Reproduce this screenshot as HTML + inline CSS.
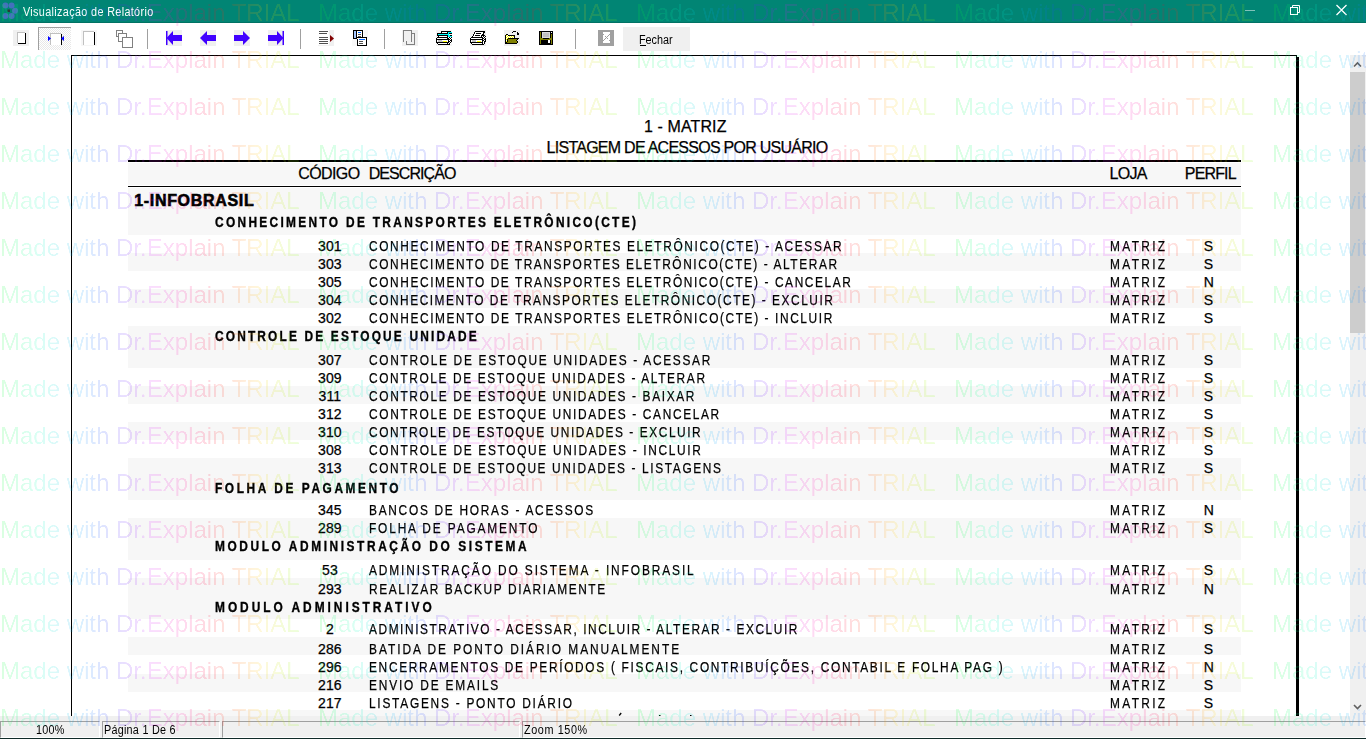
<!DOCTYPE html>
<html><head><meta charset="utf-8">
<style>
html,body{margin:0;padding:0;}
body{width:1366px;height:739px;overflow:hidden;position:relative;background:#ffffff;font-family:"Liberation Sans",sans-serif;}
.t{position:absolute;line-height:40px;white-space:pre;font-family:"Liberation Sans",sans-serif;-webkit-text-stroke:0.25px currentColor;}
.sh{position:absolute;left:128px;width:1113px;background:#f7f7f7;}
.blk{position:absolute;background:#000;}
.pn{position:absolute;top:721px;height:17px;box-sizing:border-box;border-top:1px solid #a0a0a0;border-left:1px solid #a0a0a0;border-right:1px solid #fff;border-bottom:1px solid #fff;}
</style></head><body>
<!-- title bar -->
<div style="position:absolute;left:0;top:0;width:1366px;height:23px;background:#018574"></div>
<div style="position:absolute;left:0;top:22px;width:1366px;height:1px;background:#017264"></div>
<svg style="position:absolute;left:0;top:0" width="1366" height="23">
 <g fill="#4370bd">
  <circle cx="5.4" cy="5.6" r="3"/><circle cx="11.6" cy="5.6" r="3"/><circle cx="15" cy="10.8" r="3"/>
  <circle cx="5.4" cy="15.9" r="3"/><circle cx="11.6" cy="15.9" r="3"/>
 </g>
 <rect x="7.5" y="9.5" width="2.5" height="2.5" fill="#283838"/>
 <rect x="1245" y="10" width="10" height="1" fill="#80c2b9"/>
 <g fill="none" stroke="#ffffff" stroke-width="1">
  <rect x="1290.5" y="7.5" width="7" height="7"/>
  <path d="M1292.5 7.5 V5.5 H1299.5 V12.5 H1297.5"/>
  <path d="M1336.5 5 L1346.5 15 M1346.5 5 L1336.5 15" stroke-width="1.3"/>
 </g>
</svg>
<!-- toolbar -->
<svg style="position:absolute;left:0;top:0" width="700" height="55" shape-rendering="crispEdges">
 <defs>
  <pattern id="dith" width="2" height="2" patternUnits="userSpaceOnUse">
   <rect width="2" height="2" fill="#ffffff"/><rect width="1" height="1" fill="#e8e8e8"/><rect x="1" y="1" width="1" height="1" fill="#e8e8e8"/>
  </pattern>
 </defs>
 <!-- btn1 -->
 <rect x="13" y="30" width="16" height="16" fill="#f0f0f0"/>
 <rect x="17" y="32" width="8" height="11" fill="#c0c0c0"/><rect x="18" y="33" width="7" height="10" fill="#fff"/>
 <rect x="25" y="33" width="1" height="11" fill="#000"/><rect x="18" y="43" width="8" height="1" fill="#000"/>
 <!-- btn2 pressed -->
 <rect x="38" y="27" width="33" height="23" fill="url(#dith)"/>
 <rect x="38" y="27" width="33" height="1" fill="#a0a0a0"/><rect x="38" y="27" width="1" height="23" fill="#a0a0a0"/>
 <rect x="50" y="33" width="11" height="12" fill="#c0c0c0"/><rect x="51" y="34" width="10" height="11" fill="#fff"/>
 <rect x="61" y="34" width="1" height="11" fill="#000"/>
 <path d="M48 36 L51 38.5 L48 41 Z M64 36 L61 38.5 L64 41 Z" fill="#0000ff" shape-rendering="auto"/>
 <!-- btn3 -->
 <rect x="81" y="30" width="16" height="16" fill="#f6f6f6"/>
 <rect x="83" y="31" width="11" height="14" fill="#c0c0c0"/><rect x="84" y="32" width="10" height="13" fill="#fff"/>
 <rect x="94" y="32" width="1" height="13" fill="#000"/>
 <!-- btn4 -->
 <g fill="#fff" stroke="#808080" stroke-width="1">
  <rect x="116.5" y="30.5" width="6" height="6"/><rect x="118.5" y="33.5" width="8" height="8"/><rect x="122.5" y="37.5" width="10" height="10"/>
 </g>
 <!-- separators -->
 <g fill="#a0a0a0"><rect x="147" y="29" width="1" height="20"/><rect x="300" y="29" width="1" height="20"/><rect x="384" y="29" width="1" height="20"/><rect x="575" y="29" width="1" height="20"/></g>
 <!-- arrows -->
 <g fill="#f0f0f0"><rect x="166" y="30" width="16" height="16"/><rect x="200" y="30" width="16" height="16"/><rect x="234" y="30" width="16" height="16"/><rect x="268" y="30" width="16" height="16"/></g>
 <g fill="#4000ff" shape-rendering="auto">
  <rect x="166" y="31" width="1.5" height="14"/><path d="M166.5 38 L173 31 V45 Z"/><rect x="173" y="35" width="9" height="6"/>
  <path d="M200 38 L207 31 V45 Z"/><rect x="207" y="35" width="9" height="6"/>
  <rect x="234" y="35" width="9" height="6"/><path d="M250 38 L243 31 V45 Z"/>
  <rect x="268" y="35" width="9" height="6"/><path d="M283.5 38 L277 31 V45 Z"/><rect x="282.5" y="31" width="1.5" height="14"/>
 </g>
 <!-- lines + red triangle -->
 <rect x="318" y="30" width="16" height="16" fill="#f0f0f0"/><rect x="318" y="30" width="11" height="15" fill="#fff"/>
 <g fill="#505050"><rect x="319" y="31" width="9" height="1"/><rect x="319" y="33" width="8" height="1"/><rect x="319" y="37" width="9" height="1"/><rect x="319" y="39" width="9" height="1"/><rect x="319" y="41" width="9" height="1"/><rect x="319" y="43" width="9" height="1"/></g>
 <path d="M330 35 L334 38.5 L330 42 Z" fill="#800000" shape-rendering="auto"/>
 <rect x="402" y="30" width="16" height="16" fill="#f0f0f0"/>
 <g fill="#808080"><rect x="403" y="30" width="1" height="12"/><rect x="403" y="30" width="9" height="1"/><rect x="411" y="30" width="1" height="12"/>
 <rect x="411" y="33" width="4" height="1"/><rect x="414" y="33" width="1" height="12"/><rect x="406" y="44" width="9" height="1"/><rect x="406" y="41" width="1" height="4"/></g>
 <rect x="436" y="30" width="16" height="16" fill="#f4f4f4"/>
 <rect x="470" y="30" width="16" height="16" fill="#f0f0f0"/>
 <rect x="504" y="30" width="16" height="16" fill="#f0f0f0"/>
 <rect x="364" y="30" width="4" height="8" fill="#f8f8f8"/><rect x="352" y="39" width="5" height="7" fill="#f8f8f8"/>
<rect x="441" y="31" width="10" height="1" fill="#000000"/>
<rect x="441" y="32" width="1" height="1" fill="#000000"/>
<rect x="442" y="32" width="5" height="1" fill="#ffffff"/>
<rect x="447" y="32" width="1" height="1" fill="#000000"/>
<rect x="448" y="32" width="4" height="1" fill="#00ffff"/>
<rect x="437" y="33" width="11" height="1" fill="#000000"/>
<rect x="448" y="33" width="1" height="1" fill="#00ffff"/>
<rect x="449" y="33" width="3" height="1" fill="#000000"/>
<rect x="437" y="34" width="1" height="1" fill="#000000"/>
<rect x="438" y="34" width="11" height="1" fill="#00ffff"/>
<rect x="437" y="35" width="11" height="1" fill="#000000"/>
<rect x="448" y="35" width="2" height="1" fill="#00ffff"/>
<rect x="450" y="35" width="2" height="1" fill="#000000"/>
<rect x="438" y="36" width="1" height="1" fill="#000000"/>
<rect x="439" y="36" width="8" height="1" fill="#ffffff"/>
<rect x="447" y="36" width="1" height="1" fill="#000000"/>
<rect x="448" y="36" width="4" height="1" fill="#00ffff"/>
<rect x="437" y="37" width="11" height="1" fill="#000000"/>
<rect x="448" y="37" width="1" height="1" fill="#ffffff"/>
<rect x="449" y="37" width="1" height="1" fill="#000000"/>
<rect x="450" y="37" width="1" height="1" fill="#ffffff"/>
<rect x="451" y="37" width="1" height="1" fill="#000000"/>
<rect x="436" y="38" width="1" height="1" fill="#000000"/>
<rect x="437" y="38" width="10" height="1" fill="#ffffff"/>
<rect x="447" y="38" width="2" height="1" fill="#000000"/>
<rect x="449" y="38" width="1" height="1" fill="#ffffff"/>
<rect x="450" y="38" width="1" height="1" fill="#000000"/>
<rect x="451" y="38" width="1" height="1" fill="#ffffff"/>
<rect x="436" y="39" width="14" height="1" fill="#000000"/>
<rect x="450" y="39" width="1" height="1" fill="#ffffff"/>
<rect x="451" y="39" width="1" height="1" fill="#000000"/>
<rect x="436" y="40" width="1" height="1" fill="#000000"/>
<rect x="437" y="40" width="1" height="1" fill="#ffffff"/>
<rect x="438" y="40" width="4" height="1" fill="#c0c0c0"/>
<rect x="442" y="40" width="6" height="1" fill="#ffffff"/>
<rect x="448" y="40" width="1" height="1" fill="#000000"/>
<rect x="449" y="40" width="1" height="1" fill="#ffffff"/>
<rect x="450" y="40" width="2" height="1" fill="#000000"/>
<rect x="436" y="41" width="1" height="1" fill="#000000"/>
<rect x="437" y="41" width="1" height="1" fill="#ffffff"/>
<rect x="438" y="41" width="5" height="1" fill="#c0c0c0"/>
<rect x="443" y="41" width="4" height="1" fill="#ffff00"/>
<rect x="447" y="41" width="1" height="1" fill="#ffffff"/>
<rect x="448" y="41" width="2" height="1" fill="#000000"/>
<rect x="450" y="41" width="1" height="1" fill="#ffffff"/>
<rect x="451" y="41" width="1" height="1" fill="#000000"/>
<rect x="436" y="42" width="13" height="1" fill="#000000"/>
<rect x="449" y="42" width="1" height="1" fill="#ffffff"/>
<rect x="450" y="42" width="1" height="1" fill="#000000"/>
<rect x="437" y="43" width="1" height="1" fill="#000000"/>
<rect x="438" y="43" width="9" height="1" fill="#ffffff"/>
<rect x="447" y="43" width="1" height="1" fill="#000000"/>
<rect x="448" y="43" width="1" height="1" fill="#ffffff"/>
<rect x="449" y="43" width="1" height="1" fill="#000000"/>
<rect x="450" y="43" width="1" height="1" fill="#ffffff"/>
<rect x="438" y="44" width="12" height="1" fill="#000000"/>
<rect x="475" y="31" width="10" height="1" fill="#000000"/>
<rect x="474" y="32" width="1" height="1" fill="#000000"/>
<rect x="475" y="32" width="8" height="1" fill="#ffffff"/>
<rect x="483" y="32" width="2" height="1" fill="#000000"/>
<rect x="474" y="33" width="1" height="1" fill="#000000"/>
<rect x="475" y="33" width="1" height="1" fill="#ffffff"/>
<rect x="476" y="33" width="5" height="1" fill="#000000"/>
<rect x="481" y="33" width="2" height="1" fill="#ffffff"/>
<rect x="483" y="33" width="1" height="1" fill="#000000"/>
<rect x="473" y="34" width="1" height="1" fill="#000000"/>
<rect x="474" y="34" width="8" height="1" fill="#ffffff"/>
<rect x="482" y="34" width="2" height="1" fill="#000000"/>
<rect x="473" y="35" width="1" height="1" fill="#000000"/>
<rect x="474" y="35" width="1" height="1" fill="#ffffff"/>
<rect x="475" y="35" width="5" height="1" fill="#000000"/>
<rect x="480" y="35" width="1" height="1" fill="#ffffff"/>
<rect x="481" y="35" width="4" height="1" fill="#000000"/>
<rect x="472" y="36" width="1" height="1" fill="#000000"/>
<rect x="473" y="36" width="8" height="1" fill="#ffffff"/>
<rect x="481" y="36" width="1" height="1" fill="#000000"/>
<rect x="482" y="36" width="1" height="1" fill="#ffffff"/>
<rect x="483" y="36" width="1" height="1" fill="#000000"/>
<rect x="484" y="36" width="1" height="1" fill="#ffffff"/>
<rect x="485" y="36" width="1" height="1" fill="#000000"/>
<rect x="471" y="37" width="12" height="1" fill="#000000"/>
<rect x="483" y="37" width="1" height="1" fill="#ffffff"/>
<rect x="484" y="37" width="1" height="1" fill="#000000"/>
<rect x="485" y="37" width="1" height="1" fill="#ffffff"/>
<rect x="470" y="38" width="1" height="1" fill="#000000"/>
<rect x="471" y="38" width="11" height="1" fill="#ffffff"/>
<rect x="482" y="38" width="2" height="1" fill="#000000"/>
<rect x="484" y="38" width="1" height="1" fill="#ffffff"/>
<rect x="485" y="38" width="1" height="1" fill="#000000"/>
<rect x="470" y="39" width="13" height="1" fill="#000000"/>
<rect x="483" y="39" width="1" height="1" fill="#ffffff"/>
<rect x="484" y="39" width="2" height="1" fill="#000000"/>
<rect x="470" y="40" width="1" height="1" fill="#000000"/>
<rect x="471" y="40" width="1" height="1" fill="#ffffff"/>
<rect x="472" y="40" width="4" height="1" fill="#c0c0c0"/>
<rect x="476" y="40" width="6" height="1" fill="#ffffff"/>
<rect x="482" y="40" width="2" height="1" fill="#000000"/>
<rect x="484" y="40" width="1" height="1" fill="#ffffff"/>
<rect x="485" y="40" width="1" height="1" fill="#000000"/>
<rect x="470" y="41" width="1" height="1" fill="#000000"/>
<rect x="471" y="41" width="1" height="1" fill="#ffffff"/>
<rect x="472" y="41" width="4" height="1" fill="#c0c0c0"/>
<rect x="476" y="41" width="1" height="1" fill="#ffffff"/>
<rect x="477" y="41" width="4" height="1" fill="#ffff00"/>
<rect x="481" y="41" width="1" height="1" fill="#ffffff"/>
<rect x="482" y="41" width="1" height="1" fill="#000000"/>
<rect x="483" y="41" width="1" height="1" fill="#ffffff"/>
<rect x="484" y="41" width="2" height="1" fill="#000000"/>
<rect x="470" y="42" width="13" height="1" fill="#000000"/>
<rect x="483" y="42" width="1" height="1" fill="#ffffff"/>
<rect x="484" y="42" width="1" height="1" fill="#000000"/>
<rect x="471" y="43" width="1" height="1" fill="#000000"/>
<rect x="472" y="43" width="10" height="1" fill="#ffffff"/>
<rect x="482" y="43" width="1" height="1" fill="#000000"/>
<rect x="483" y="43" width="1" height="1" fill="#ffffff"/>
<rect x="484" y="43" width="1" height="1" fill="#000000"/>
<rect x="472" y="44" width="12" height="1" fill="#000000"/>
<rect x="513" y="31" width="3" height="1" fill="#000000"/>
<rect x="512" y="32" width="1" height="1" fill="#000000"/>
<rect x="517" y="32" width="1" height="1" fill="#000000"/>
<rect x="517" y="33" width="2" height="1" fill="#000000"/>
<rect x="506" y="34" width="2" height="1" fill="#000000"/>
<rect x="517" y="34" width="2" height="1" fill="#000000"/>
<rect x="505" y="35" width="1" height="1" fill="#000000"/>
<rect x="506" y="35" width="1" height="1" fill="#ffff00"/>
<rect x="507" y="35" width="1" height="1" fill="#ffffff"/>
<rect x="508" y="35" width="7" height="1" fill="#000000"/>
<rect x="505" y="36" width="1" height="1" fill="#000000"/>
<rect x="506" y="36" width="1" height="1" fill="#ffffff"/>
<rect x="507" y="36" width="1" height="1" fill="#ffff00"/>
<rect x="508" y="36" width="1" height="1" fill="#ffffff"/>
<rect x="509" y="36" width="1" height="1" fill="#ffff00"/>
<rect x="510" y="36" width="1" height="1" fill="#ffffff"/>
<rect x="511" y="36" width="1" height="1" fill="#ffff00"/>
<rect x="512" y="36" width="1" height="1" fill="#ffffff"/>
<rect x="513" y="36" width="1" height="1" fill="#ffff00"/>
<rect x="514" y="36" width="1" height="1" fill="#000000"/>
<rect x="505" y="37" width="1" height="1" fill="#000000"/>
<rect x="506" y="37" width="1" height="1" fill="#ffff00"/>
<rect x="507" y="37" width="1" height="1" fill="#ffffff"/>
<rect x="508" y="37" width="1" height="1" fill="#ffff00"/>
<rect x="509" y="37" width="1" height="1" fill="#ffffff"/>
<rect x="510" y="37" width="1" height="1" fill="#ffff00"/>
<rect x="511" y="37" width="1" height="1" fill="#ffffff"/>
<rect x="512" y="37" width="1" height="1" fill="#ffff00"/>
<rect x="513" y="37" width="1" height="1" fill="#ffffff"/>
<rect x="514" y="37" width="1" height="1" fill="#000000"/>
<rect x="505" y="38" width="1" height="1" fill="#000000"/>
<rect x="506" y="38" width="1" height="1" fill="#ffffff"/>
<rect x="507" y="38" width="1" height="1" fill="#ffff00"/>
<rect x="508" y="38" width="11" height="1" fill="#000000"/>
<rect x="505" y="39" width="1" height="1" fill="#000000"/>
<rect x="506" y="39" width="1" height="1" fill="#ffff00"/>
<rect x="507" y="39" width="1" height="1" fill="#000000"/>
<rect x="508" y="39" width="9" height="1" fill="#808000"/>
<rect x="517" y="39" width="1" height="1" fill="#000000"/>
<rect x="505" y="40" width="1" height="1" fill="#000000"/>
<rect x="506" y="40" width="1" height="1" fill="#ffffff"/>
<rect x="507" y="40" width="1" height="1" fill="#000000"/>
<rect x="508" y="40" width="8" height="1" fill="#808000"/>
<rect x="516" y="40" width="1" height="1" fill="#000000"/>
<rect x="505" y="41" width="1" height="1" fill="#000000"/>
<rect x="506" y="41" width="1" height="1" fill="#ffff00"/>
<rect x="507" y="41" width="1" height="1" fill="#000000"/>
<rect x="508" y="41" width="9" height="1" fill="#808000"/>
<rect x="517" y="41" width="1" height="1" fill="#000000"/>
<rect x="505" y="42" width="2" height="1" fill="#000000"/>
<rect x="507" y="42" width="10" height="1" fill="#808000"/>
<rect x="517" y="42" width="1" height="1" fill="#000000"/>
<rect x="505" y="43" width="12" height="1" fill="#000000"/>
<rect x="539" y="31" width="14" height="1" fill="#000000"/>
<rect x="539" y="32" width="1" height="1" fill="#000000"/>
<rect x="540" y="32" width="1" height="1" fill="#808000"/>
<rect x="541" y="32" width="1" height="1" fill="#000000"/>
<rect x="542" y="32" width="8" height="1" fill="#dcdcdc"/>
<rect x="550" y="32" width="1" height="1" fill="#000000"/>
<rect x="551" y="32" width="1" height="1" fill="#ffffff"/>
<rect x="552" y="32" width="1" height="1" fill="#000000"/>
<rect x="539" y="33" width="1" height="1" fill="#000000"/>
<rect x="540" y="33" width="1" height="1" fill="#808000"/>
<rect x="541" y="33" width="1" height="1" fill="#000000"/>
<rect x="542" y="33" width="1" height="1" fill="#dcdcdc"/>
<rect x="543" y="33" width="6" height="1" fill="#c0c0c0"/>
<rect x="549" y="33" width="1" height="1" fill="#dcdcdc"/>
<rect x="550" y="33" width="3" height="1" fill="#000000"/>
<rect x="539" y="34" width="1" height="1" fill="#000000"/>
<rect x="540" y="34" width="1" height="1" fill="#808000"/>
<rect x="541" y="34" width="1" height="1" fill="#000000"/>
<rect x="542" y="34" width="1" height="1" fill="#dcdcdc"/>
<rect x="543" y="34" width="6" height="1" fill="#c0c0c0"/>
<rect x="549" y="34" width="1" height="1" fill="#dcdcdc"/>
<rect x="550" y="34" width="1" height="1" fill="#000000"/>
<rect x="551" y="34" width="1" height="1" fill="#808000"/>
<rect x="552" y="34" width="1" height="1" fill="#000000"/>
<rect x="539" y="35" width="1" height="1" fill="#000000"/>
<rect x="540" y="35" width="1" height="1" fill="#808000"/>
<rect x="541" y="35" width="1" height="1" fill="#000000"/>
<rect x="542" y="35" width="1" height="1" fill="#dcdcdc"/>
<rect x="543" y="35" width="6" height="1" fill="#c0c0c0"/>
<rect x="549" y="35" width="1" height="1" fill="#dcdcdc"/>
<rect x="550" y="35" width="1" height="1" fill="#000000"/>
<rect x="551" y="35" width="1" height="1" fill="#808000"/>
<rect x="552" y="35" width="1" height="1" fill="#000000"/>
<rect x="539" y="36" width="1" height="1" fill="#000000"/>
<rect x="540" y="36" width="1" height="1" fill="#808000"/>
<rect x="541" y="36" width="1" height="1" fill="#000000"/>
<rect x="542" y="36" width="1" height="1" fill="#dcdcdc"/>
<rect x="543" y="36" width="6" height="1" fill="#c0c0c0"/>
<rect x="549" y="36" width="1" height="1" fill="#dcdcdc"/>
<rect x="550" y="36" width="1" height="1" fill="#000000"/>
<rect x="551" y="36" width="1" height="1" fill="#808000"/>
<rect x="552" y="36" width="1" height="1" fill="#000000"/>
<rect x="539" y="37" width="1" height="1" fill="#000000"/>
<rect x="540" y="37" width="1" height="1" fill="#808000"/>
<rect x="541" y="37" width="1" height="1" fill="#000000"/>
<rect x="542" y="37" width="8" height="1" fill="#dcdcdc"/>
<rect x="550" y="37" width="1" height="1" fill="#000000"/>
<rect x="551" y="37" width="1" height="1" fill="#808000"/>
<rect x="552" y="37" width="1" height="1" fill="#000000"/>
<rect x="539" y="38" width="1" height="1" fill="#000000"/>
<rect x="540" y="38" width="3" height="1" fill="#808000"/>
<rect x="543" y="38" width="6" height="1" fill="#000000"/>
<rect x="549" y="38" width="3" height="1" fill="#808000"/>
<rect x="552" y="38" width="1" height="1" fill="#000000"/>
<rect x="539" y="39" width="1" height="1" fill="#000000"/>
<rect x="540" y="39" width="12" height="1" fill="#808000"/>
<rect x="552" y="39" width="1" height="1" fill="#000000"/>
<rect x="539" y="40" width="1" height="1" fill="#000000"/>
<rect x="540" y="40" width="1" height="1" fill="#808000"/>
<rect x="541" y="40" width="7" height="1" fill="#000000"/>
<rect x="548" y="40" width="2" height="1" fill="#ffffff"/>
<rect x="550" y="40" width="1" height="1" fill="#000000"/>
<rect x="551" y="40" width="1" height="1" fill="#808000"/>
<rect x="552" y="40" width="1" height="1" fill="#000000"/>
<rect x="539" y="41" width="1" height="1" fill="#000000"/>
<rect x="540" y="41" width="1" height="1" fill="#808000"/>
<rect x="541" y="41" width="7" height="1" fill="#000000"/>
<rect x="548" y="41" width="2" height="1" fill="#ffffff"/>
<rect x="550" y="41" width="1" height="1" fill="#000000"/>
<rect x="551" y="41" width="1" height="1" fill="#808000"/>
<rect x="552" y="41" width="1" height="1" fill="#000000"/>
<rect x="539" y="42" width="1" height="1" fill="#000000"/>
<rect x="540" y="42" width="1" height="1" fill="#808000"/>
<rect x="541" y="42" width="7" height="1" fill="#000000"/>
<rect x="548" y="42" width="2" height="1" fill="#ffffff"/>
<rect x="550" y="42" width="1" height="1" fill="#000000"/>
<rect x="551" y="42" width="1" height="1" fill="#808000"/>
<rect x="552" y="42" width="1" height="1" fill="#000000"/>
<rect x="539" y="43" width="1" height="1" fill="#000000"/>
<rect x="540" y="43" width="1" height="1" fill="#808000"/>
<rect x="541" y="43" width="10" height="1" fill="#000000"/>
<rect x="551" y="43" width="1" height="1" fill="#808000"/>
<rect x="552" y="43" width="1" height="1" fill="#000000"/>
<rect x="539" y="44" width="14" height="1" fill="#000000"/>
<rect x="353" y="30" width="10" height="1" fill="#000000"/>
<rect x="353" y="31" width="1" height="1" fill="#000000"/>
<rect x="354" y="31" width="2" height="1" fill="#a6c8ff"/>
<rect x="356" y="31" width="1" height="1" fill="#000000"/>
<rect x="357" y="31" width="5" height="1" fill="#ffffff"/>
<rect x="362" y="31" width="1" height="1" fill="#000000"/>
<rect x="353" y="32" width="1" height="1" fill="#000000"/>
<rect x="354" y="32" width="2" height="1" fill="#a6c8ff"/>
<rect x="356" y="32" width="1" height="1" fill="#000000"/>
<rect x="357" y="32" width="1" height="1" fill="#ffffff"/>
<rect x="358" y="32" width="3" height="1" fill="#0066ff"/>
<rect x="361" y="32" width="1" height="1" fill="#ffffff"/>
<rect x="362" y="32" width="1" height="1" fill="#000000"/>
<rect x="353" y="33" width="1" height="1" fill="#000000"/>
<rect x="354" y="33" width="2" height="1" fill="#a6c8ff"/>
<rect x="356" y="33" width="1" height="1" fill="#000000"/>
<rect x="357" y="33" width="5" height="1" fill="#ffffff"/>
<rect x="362" y="33" width="1" height="1" fill="#000000"/>
<rect x="353" y="34" width="1" height="1" fill="#000000"/>
<rect x="354" y="34" width="2" height="1" fill="#a6c8ff"/>
<rect x="356" y="34" width="1" height="1" fill="#000000"/>
<rect x="357" y="34" width="1" height="1" fill="#ffffff"/>
<rect x="358" y="34" width="3" height="1" fill="#505050"/>
<rect x="361" y="34" width="1" height="1" fill="#ffffff"/>
<rect x="362" y="34" width="1" height="1" fill="#000000"/>
<rect x="353" y="35" width="1" height="1" fill="#000000"/>
<rect x="354" y="35" width="2" height="1" fill="#a6c8ff"/>
<rect x="356" y="35" width="1" height="1" fill="#000000"/>
<rect x="357" y="35" width="5" height="1" fill="#ffffff"/>
<rect x="362" y="35" width="1" height="1" fill="#000000"/>
<rect x="353" y="36" width="1" height="1" fill="#000000"/>
<rect x="354" y="36" width="2" height="1" fill="#a6c8ff"/>
<rect x="356" y="36" width="1" height="1" fill="#000000"/>
<rect x="357" y="36" width="1" height="1" fill="#ffffff"/>
<rect x="358" y="36" width="3" height="1" fill="#505050"/>
<rect x="361" y="36" width="1" height="1" fill="#ffffff"/>
<rect x="362" y="36" width="1" height="1" fill="#000000"/>
<rect x="353" y="37" width="1" height="1" fill="#000000"/>
<rect x="354" y="37" width="2" height="1" fill="#a6c8ff"/>
<rect x="356" y="37" width="11" height="1" fill="#000000"/>
<rect x="353" y="38" width="4" height="1" fill="#000000"/>
<rect x="357" y="38" width="9" height="1" fill="#ffffff"/>
<rect x="366" y="38" width="1" height="1" fill="#000000"/>
<rect x="357" y="39" width="1" height="1" fill="#000000"/>
<rect x="358" y="39" width="1" height="1" fill="#ffffff"/>
<rect x="359" y="39" width="6" height="1" fill="#0066ff"/>
<rect x="365" y="39" width="1" height="1" fill="#ffffff"/>
<rect x="366" y="39" width="1" height="1" fill="#000000"/>
<rect x="357" y="40" width="1" height="1" fill="#000000"/>
<rect x="358" y="40" width="8" height="1" fill="#ffffff"/>
<rect x="366" y="40" width="1" height="1" fill="#000000"/>
<rect x="357" y="41" width="1" height="1" fill="#000000"/>
<rect x="358" y="41" width="1" height="1" fill="#ffffff"/>
<rect x="359" y="41" width="4" height="1" fill="#505050"/>
<rect x="363" y="41" width="3" height="1" fill="#ffffff"/>
<rect x="366" y="41" width="1" height="1" fill="#000000"/>
<rect x="357" y="42" width="1" height="1" fill="#000000"/>
<rect x="358" y="42" width="8" height="1" fill="#ffffff"/>
<rect x="366" y="42" width="1" height="1" fill="#000000"/>
<rect x="357" y="43" width="1" height="1" fill="#000000"/>
<rect x="358" y="43" width="1" height="1" fill="#ffffff"/>
<rect x="359" y="43" width="4" height="1" fill="#505050"/>
<rect x="363" y="43" width="3" height="1" fill="#ffffff"/>
<rect x="366" y="43" width="1" height="1" fill="#000000"/>
<rect x="357" y="44" width="1" height="1" fill="#000000"/>
<rect x="358" y="44" width="8" height="1" fill="#ffffff"/>
<rect x="366" y="44" width="1" height="1" fill="#000000"/>
<rect x="357" y="45" width="10" height="1" fill="#000000"/>
<rect x="598" y="30" width="16" height="1" fill="#a0a0a0"/>
<rect x="598" y="31" width="16" height="1" fill="#a0a0a0"/>
<rect x="598" y="32" width="5" height="1" fill="#a0a0a0"/>
<rect x="603" y="32" width="7" height="1" fill="#ffffff"/>
<rect x="610" y="32" width="4" height="1" fill="#a0a0a0"/>
<rect x="598" y="33" width="5" height="1" fill="#a0a0a0"/>
<rect x="603" y="33" width="7" height="1" fill="#ffffff"/>
<rect x="610" y="33" width="4" height="1" fill="#a0a0a0"/>
<rect x="598" y="34" width="6" height="1" fill="#a0a0a0"/>
<rect x="604" y="34" width="5" height="1" fill="#ffffff"/>
<rect x="609" y="34" width="5" height="1" fill="#a0a0a0"/>
<rect x="598" y="35" width="5" height="1" fill="#a0a0a0"/>
<rect x="603" y="35" width="5" height="1" fill="#ffffff"/>
<rect x="608" y="35" width="1" height="1" fill="#a0a0a0"/>
<rect x="609" y="35" width="1" height="1" fill="#ffffff"/>
<rect x="610" y="35" width="4" height="1" fill="#a0a0a0"/>
<rect x="598" y="36" width="5" height="1" fill="#a0a0a0"/>
<rect x="603" y="36" width="2" height="1" fill="#ffffff"/>
<rect x="605" y="36" width="1" height="1" fill="#a0a0a0"/>
<rect x="606" y="36" width="1" height="1" fill="#ffffff"/>
<rect x="607" y="36" width="1" height="1" fill="#a0a0a0"/>
<rect x="608" y="36" width="2" height="1" fill="#ffffff"/>
<rect x="610" y="36" width="4" height="1" fill="#a0a0a0"/>
<rect x="598" y="37" width="5" height="1" fill="#a0a0a0"/>
<rect x="603" y="37" width="3" height="1" fill="#ffffff"/>
<rect x="606" y="37" width="1" height="1" fill="#a0a0a0"/>
<rect x="607" y="37" width="3" height="1" fill="#ffffff"/>
<rect x="610" y="37" width="4" height="1" fill="#a0a0a0"/>
<rect x="598" y="38" width="5" height="1" fill="#a0a0a0"/>
<rect x="603" y="38" width="2" height="1" fill="#ffffff"/>
<rect x="605" y="38" width="1" height="1" fill="#a0a0a0"/>
<rect x="606" y="38" width="1" height="1" fill="#ffffff"/>
<rect x="607" y="38" width="1" height="1" fill="#a0a0a0"/>
<rect x="608" y="38" width="2" height="1" fill="#ffffff"/>
<rect x="610" y="38" width="4" height="1" fill="#a0a0a0"/>
<rect x="598" y="39" width="5" height="1" fill="#a0a0a0"/>
<rect x="603" y="39" width="1" height="1" fill="#ffffff"/>
<rect x="604" y="39" width="1" height="1" fill="#a0a0a0"/>
<rect x="605" y="39" width="5" height="1" fill="#ffffff"/>
<rect x="610" y="39" width="4" height="1" fill="#a0a0a0"/>
<rect x="598" y="40" width="6" height="1" fill="#a0a0a0"/>
<rect x="604" y="40" width="5" height="1" fill="#ffffff"/>
<rect x="609" y="40" width="5" height="1" fill="#a0a0a0"/>
<rect x="598" y="41" width="5" height="1" fill="#a0a0a0"/>
<rect x="603" y="41" width="7" height="1" fill="#ffffff"/>
<rect x="610" y="41" width="4" height="1" fill="#a0a0a0"/>
<rect x="598" y="42" width="5" height="1" fill="#a0a0a0"/>
<rect x="603" y="42" width="7" height="1" fill="#ffffff"/>
<rect x="610" y="42" width="4" height="1" fill="#a0a0a0"/>
<rect x="598" y="43" width="16" height="1" fill="#a0a0a0"/>
<rect x="598" y="44" width="16" height="1" fill="#a0a0a0"/>
<rect x="598" y="45" width="16" height="1" fill="#a0a0a0"/>
 <!-- Fechar -->
 <rect x="623" y="27" width="67" height="24" fill="#f0f0f0"/>
 <rect x="640" y="45" width="6" height="1" fill="#000"/>
</svg>
<!-- report page borders -->
<div class="blk" style="left:71px;top:55px;width:1226px;height:1px"></div>
<div class="blk" style="left:71px;top:55px;width:1px;height:661px"></div>
<div class="blk" style="left:1296px;top:55px;width:1px;height:661px"></div>
<div class="blk" style="left:1297px;top:57px;width:2px;height:659px"></div>
<div class="blk" style="left:128px;top:160px;width:1113px;height:2px"></div>
<div class="blk" style="left:128px;top:186px;width:1113px;height:1px"></div>
<div class="sh" style="top:163px;height:22px"></div>
<div class="sh" style="top:188px;height:47px"></div>
<div class="sh" style="top:253px;height:18px"></div>
<div class="sh" style="top:289px;height:19px"></div>
<div class="sh" style="top:326px;height:42px"></div>
<div class="sh" style="top:386px;height:18px"></div>
<div class="sh" style="top:422px;height:18px"></div>
<div class="sh" style="top:458px;height:42px"></div>
<div class="sh" style="top:518px;height:42px"></div>
<div class="sh" style="top:578px;height:41px"></div>
<div class="sh" style="top:637px;height:18px"></div>
<div class="sh" style="top:674px;height:18px"></div>
<div class="sh" style="top:710px;height:6px"></div>
<div class="t" style="left:22.80px;top:-8px;font-size:12px;letter-spacing:0.394px;color:#ffffff;-webkit-text-stroke:0;transform:scaleX(0.900);transform-origin:0 0">Visualização de Relatório</div>
<div class="t" style="left:638.80px;top:20px;font-size:12px;letter-spacing:-0.022px;color:#000000;-webkit-text-stroke:0;transform:scaleX(0.900);transform-origin:0 0">Fechar</div>
<div class="t" style="left:643.90px;top:107px;font-size:16px;letter-spacing:0.122px;color:#000000">1 - MATRIZ</div>
<div class="t" style="left:546.60px;top:128px;font-size:16px;letter-spacing:-0.740px;color:#000000">LISTAGEM DE ACESSOS POR USUÁRIO</div>
<div class="t" style="left:298.20px;top:154px;font-size:16px;letter-spacing:-0.600px;color:#000000">CÓDIGO</div>
<div class="t" style="left:368.70px;top:154px;font-size:16px;letter-spacing:-0.925px;color:#000000">DESCRIÇÃO</div>
<div class="t" style="left:1109.50px;top:154px;font-size:16px;letter-spacing:-0.667px;color:#000000">LOJA</div>
<div class="t" style="left:1184.80px;top:154px;font-size:16px;letter-spacing:-0.840px;color:#000000">PERFIL</div>
<div class="t" style="left:134.20px;top:181px;font-size:16px;font-weight:bold;letter-spacing:0.682px;color:#000000;-webkit-text-stroke:0.6px #000">1-INFOBRASIL</div>
<div class="t" style="left:214.65px;top:202px;font-size:14px;font-weight:bold;letter-spacing:2.721px;color:#000000;-webkit-text-stroke:0.35px #000;transform:scaleX(0.850);transform-origin:0 0">CONHECIMENTO DE TRANSPORTES ELETRÔNICO(CTE)</div>
<div class="t" style="left:214.65px;top:316px;font-size:14px;font-weight:bold;letter-spacing:2.543px;color:#000000;-webkit-text-stroke:0.35px #000;transform:scaleX(0.850);transform-origin:0 0">CONTROLE DE ESTOQUE UNIDADE</div>
<div class="t" style="left:214.65px;top:468px;font-size:14px;font-weight:bold;letter-spacing:3.021px;color:#000000;-webkit-text-stroke:0.35px #000;transform:scaleX(0.850);transform-origin:0 0">FOLHA DE PAGAMENTO</div>
<div class="t" style="left:214.65px;top:526px;font-size:14px;font-weight:bold;letter-spacing:3.035px;color:#000000;-webkit-text-stroke:0.35px #000;transform:scaleX(0.850);transform-origin:0 0">MODULO ADMINISTRAÇÃO DO SISTEMA</div>
<div class="t" style="left:214.65px;top:587px;font-size:14px;font-weight:bold;letter-spacing:3.494px;color:#000000;-webkit-text-stroke:0.35px #000;transform:scaleX(0.850);transform-origin:0 0">MODULO ADMINISTRATIVO</div>
<div class="t" style="left:318.10px;top:226px;font-size:14px;letter-spacing:0.000px;color:#000">301</div>
<div class="t" style="left:368.55px;top:226px;font-size:14px;letter-spacing:1.896px;color:#000;transform:scaleX(0.850);transform-origin:0 0">CONHECIMENTO DE TRANSPORTES ELETRÔNICO(CTE) - ACESSAR</div>
<div class="t" style="left:1109.85px;top:226px;font-size:14px;letter-spacing:2.753px;color:#000;transform:scaleX(0.850);transform-origin:0 0">MATRIZ</div>
<div class="t" style="left:1203.70px;top:226px;font-size:14px;letter-spacing:0.000px;color:#000">S</div>
<div class="t" style="left:318.10px;top:244px;font-size:14px;letter-spacing:0.000px;color:#000">303</div>
<div class="t" style="left:368.55px;top:244px;font-size:14px;letter-spacing:1.857px;color:#000;transform:scaleX(0.850);transform-origin:0 0">CONHECIMENTO DE TRANSPORTES ELETRÔNICO(CTE) - ALTERAR</div>
<div class="t" style="left:1109.85px;top:244px;font-size:14px;letter-spacing:2.753px;color:#000;transform:scaleX(0.850);transform-origin:0 0">MATRIZ</div>
<div class="t" style="left:1203.70px;top:244px;font-size:14px;letter-spacing:0.000px;color:#000">S</div>
<div class="t" style="left:318.10px;top:262px;font-size:14px;letter-spacing:0.000px;color:#000">305</div>
<div class="t" style="left:368.55px;top:262px;font-size:14px;letter-spacing:1.876px;color:#000;transform:scaleX(0.850);transform-origin:0 0">CONHECIMENTO DE TRANSPORTES ELETRÔNICO(CTE) - CANCELAR</div>
<div class="t" style="left:1109.85px;top:262px;font-size:14px;letter-spacing:2.753px;color:#000;transform:scaleX(0.850);transform-origin:0 0">MATRIZ</div>
<div class="t" style="left:1203.70px;top:262px;font-size:14px;letter-spacing:0.000px;color:#000">N</div>
<div class="t" style="left:318.10px;top:280px;font-size:14px;letter-spacing:0.000px;color:#000">304</div>
<div class="t" style="left:368.55px;top:280px;font-size:14px;letter-spacing:1.803px;color:#000;transform:scaleX(0.850);transform-origin:0 0">CONHECIMENTO DE TRANSPORTES ELETRÔNICO(CTE) - EXCLUIR</div>
<div class="t" style="left:1109.85px;top:280px;font-size:14px;letter-spacing:2.753px;color:#000;transform:scaleX(0.850);transform-origin:0 0">MATRIZ</div>
<div class="t" style="left:1203.70px;top:280px;font-size:14px;letter-spacing:0.000px;color:#000">S</div>
<div class="t" style="left:318.10px;top:298px;font-size:14px;letter-spacing:0.000px;color:#000">302</div>
<div class="t" style="left:368.55px;top:298px;font-size:14px;letter-spacing:1.880px;color:#000;transform:scaleX(0.850);transform-origin:0 0">CONHECIMENTO DE TRANSPORTES ELETRÔNICO(CTE) - INCLUIR</div>
<div class="t" style="left:1109.85px;top:298px;font-size:14px;letter-spacing:2.753px;color:#000;transform:scaleX(0.850);transform-origin:0 0">MATRIZ</div>
<div class="t" style="left:1203.70px;top:298px;font-size:14px;letter-spacing:0.000px;color:#000">S</div>
<div class="t" style="left:318.10px;top:340px;font-size:14px;letter-spacing:0.000px;color:#000">307</div>
<div class="t" style="left:368.55px;top:340px;font-size:14px;letter-spacing:1.987px;color:#000;transform:scaleX(0.850);transform-origin:0 0">CONTROLE DE ESTOQUE UNIDADES - ACESSAR</div>
<div class="t" style="left:1109.85px;top:340px;font-size:14px;letter-spacing:2.753px;color:#000;transform:scaleX(0.850);transform-origin:0 0">MATRIZ</div>
<div class="t" style="left:1203.70px;top:340px;font-size:14px;letter-spacing:0.000px;color:#000">S</div>
<div class="t" style="left:318.10px;top:358px;font-size:14px;letter-spacing:0.000px;color:#000">309</div>
<div class="t" style="left:368.55px;top:358px;font-size:14px;letter-spacing:1.909px;color:#000;transform:scaleX(0.850);transform-origin:0 0">CONTROLE DE ESTOQUE UNIDADES - ALTERAR</div>
<div class="t" style="left:1109.85px;top:358px;font-size:14px;letter-spacing:2.753px;color:#000;transform:scaleX(0.850);transform-origin:0 0">MATRIZ</div>
<div class="t" style="left:1203.70px;top:358px;font-size:14px;letter-spacing:0.000px;color:#000">S</div>
<div class="t" style="left:318.60px;top:376px;font-size:14px;letter-spacing:0.000px;color:#000">311</div>
<div class="t" style="left:368.55px;top:376px;font-size:14px;letter-spacing:1.935px;color:#000;transform:scaleX(0.850);transform-origin:0 0">CONTROLE DE ESTOQUE UNIDADES - BAIXAR</div>
<div class="t" style="left:1109.85px;top:376px;font-size:14px;letter-spacing:2.753px;color:#000;transform:scaleX(0.850);transform-origin:0 0">MATRIZ</div>
<div class="t" style="left:1203.70px;top:376px;font-size:14px;letter-spacing:0.000px;color:#000">S</div>
<div class="t" style="left:318.10px;top:394px;font-size:14px;letter-spacing:0.000px;color:#000">312</div>
<div class="t" style="left:368.55px;top:394px;font-size:14px;letter-spacing:1.944px;color:#000;transform:scaleX(0.850);transform-origin:0 0">CONTROLE DE ESTOQUE UNIDADES - CANCELAR</div>
<div class="t" style="left:1109.85px;top:394px;font-size:14px;letter-spacing:2.753px;color:#000;transform:scaleX(0.850);transform-origin:0 0">MATRIZ</div>
<div class="t" style="left:1203.70px;top:394px;font-size:14px;letter-spacing:0.000px;color:#000">S</div>
<div class="t" style="left:318.10px;top:412px;font-size:14px;letter-spacing:0.000px;color:#000">310</div>
<div class="t" style="left:368.55px;top:412px;font-size:14px;letter-spacing:1.827px;color:#000;transform:scaleX(0.850);transform-origin:0 0">CONTROLE DE ESTOQUE UNIDADES - EXCLUIR</div>
<div class="t" style="left:1109.85px;top:412px;font-size:14px;letter-spacing:2.753px;color:#000;transform:scaleX(0.850);transform-origin:0 0">MATRIZ</div>
<div class="t" style="left:1203.70px;top:412px;font-size:14px;letter-spacing:0.000px;color:#000">S</div>
<div class="t" style="left:318.10px;top:430px;font-size:14px;letter-spacing:0.000px;color:#000">308</div>
<div class="t" style="left:368.55px;top:430px;font-size:14px;letter-spacing:1.962px;color:#000;transform:scaleX(0.850);transform-origin:0 0">CONTROLE DE ESTOQUE UNIDADES - INCLUIR</div>
<div class="t" style="left:1109.85px;top:430px;font-size:14px;letter-spacing:2.753px;color:#000;transform:scaleX(0.850);transform-origin:0 0">MATRIZ</div>
<div class="t" style="left:1203.70px;top:430px;font-size:14px;letter-spacing:0.000px;color:#000">S</div>
<div class="t" style="left:318.10px;top:448px;font-size:14px;letter-spacing:0.000px;color:#000">313</div>
<div class="t" style="left:368.55px;top:448px;font-size:14px;letter-spacing:1.916px;color:#000;transform:scaleX(0.850);transform-origin:0 0">CONTROLE DE ESTOQUE UNIDADES - LISTAGENS</div>
<div class="t" style="left:1109.85px;top:448px;font-size:14px;letter-spacing:2.753px;color:#000;transform:scaleX(0.850);transform-origin:0 0">MATRIZ</div>
<div class="t" style="left:1203.70px;top:448px;font-size:14px;letter-spacing:0.000px;color:#000">S</div>
<div class="t" style="left:318.10px;top:490px;font-size:14px;letter-spacing:0.000px;color:#000">345</div>
<div class="t" style="left:368.55px;top:490px;font-size:14px;letter-spacing:2.015px;color:#000;transform:scaleX(0.850);transform-origin:0 0">BANCOS DE HORAS - ACESSOS</div>
<div class="t" style="left:1109.85px;top:490px;font-size:14px;letter-spacing:2.753px;color:#000;transform:scaleX(0.850);transform-origin:0 0">MATRIZ</div>
<div class="t" style="left:1203.70px;top:490px;font-size:14px;letter-spacing:0.000px;color:#000">N</div>
<div class="t" style="left:318.10px;top:508px;font-size:14px;letter-spacing:0.000px;color:#000">289</div>
<div class="t" style="left:368.55px;top:508px;font-size:14px;letter-spacing:2.166px;color:#000;transform:scaleX(0.850);transform-origin:0 0">FOLHA DE PAGAMENTO</div>
<div class="t" style="left:1109.85px;top:508px;font-size:14px;letter-spacing:2.753px;color:#000;transform:scaleX(0.850);transform-origin:0 0">MATRIZ</div>
<div class="t" style="left:1203.70px;top:508px;font-size:14px;letter-spacing:0.000px;color:#000">S</div>
<div class="t" style="left:322.10px;top:550px;font-size:14px;letter-spacing:0.000px;color:#000">53</div>
<div class="t" style="left:369.40px;top:550px;font-size:14px;letter-spacing:2.227px;color:#000;transform:scaleX(0.850);transform-origin:0 0">ADMINISTRAÇÃO DO SISTEMA - INFOBRASIL</div>
<div class="t" style="left:1109.85px;top:550px;font-size:14px;letter-spacing:2.753px;color:#000;transform:scaleX(0.850);transform-origin:0 0">MATRIZ</div>
<div class="t" style="left:1203.70px;top:550px;font-size:14px;letter-spacing:0.000px;color:#000">S</div>
<div class="t" style="left:318.10px;top:569px;font-size:14px;letter-spacing:0.000px;color:#000">293</div>
<div class="t" style="left:368.55px;top:569px;font-size:14px;letter-spacing:1.869px;color:#000;transform:scaleX(0.850);transform-origin:0 0">REALIZAR BACKUP DIARIAMENTE</div>
<div class="t" style="left:1109.85px;top:569px;font-size:14px;letter-spacing:2.753px;color:#000;transform:scaleX(0.850);transform-origin:0 0">MATRIZ</div>
<div class="t" style="left:1203.70px;top:569px;font-size:14px;letter-spacing:0.000px;color:#000">N</div>
<div class="t" style="left:326.10px;top:609px;font-size:14px;letter-spacing:0.000px;color:#000">2</div>
<div class="t" style="left:369.40px;top:609px;font-size:14px;letter-spacing:1.833px;color:#000;transform:scaleX(0.850);transform-origin:0 0">ADMINISTRATIVO - ACESSAR, INCLUIR - ALTERAR - EXCLUIR</div>
<div class="t" style="left:1109.85px;top:609px;font-size:14px;letter-spacing:2.753px;color:#000;transform:scaleX(0.850);transform-origin:0 0">MATRIZ</div>
<div class="t" style="left:1203.70px;top:609px;font-size:14px;letter-spacing:0.000px;color:#000">S</div>
<div class="t" style="left:318.10px;top:629px;font-size:14px;letter-spacing:0.000px;color:#000">286</div>
<div class="t" style="left:368.55px;top:629px;font-size:14px;letter-spacing:2.301px;color:#000;transform:scaleX(0.850);transform-origin:0 0">BATIDA DE PONTO DIÁRIO MANUALMENTE</div>
<div class="t" style="left:1109.85px;top:629px;font-size:14px;letter-spacing:2.753px;color:#000;transform:scaleX(0.850);transform-origin:0 0">MATRIZ</div>
<div class="t" style="left:1203.70px;top:629px;font-size:14px;letter-spacing:0.000px;color:#000">S</div>
<div class="t" style="left:318.10px;top:647px;font-size:14px;letter-spacing:0.000px;color:#000">296</div>
<div class="t" style="left:368.55px;top:647px;font-size:14px;letter-spacing:1.981px;color:#000;transform:scaleX(0.850);transform-origin:0 0">ENCERRAMENTOS DE PERÍODOS ( FISCAIS, CONTRIBUÍÇÕES, CONTABIL E FOLHA PAG )</div>
<div class="t" style="left:1109.85px;top:647px;font-size:14px;letter-spacing:2.753px;color:#000;transform:scaleX(0.850);transform-origin:0 0">MATRIZ</div>
<div class="t" style="left:1203.70px;top:647px;font-size:14px;letter-spacing:0.000px;color:#000">N</div>
<div class="t" style="left:318.10px;top:665px;font-size:14px;letter-spacing:0.000px;color:#000">216</div>
<div class="t" style="left:368.55px;top:665px;font-size:14px;letter-spacing:2.139px;color:#000;transform:scaleX(0.850);transform-origin:0 0">ENVIO DE EMAILS</div>
<div class="t" style="left:1109.85px;top:665px;font-size:14px;letter-spacing:2.753px;color:#000;transform:scaleX(0.850);transform-origin:0 0">MATRIZ</div>
<div class="t" style="left:1203.70px;top:665px;font-size:14px;letter-spacing:0.000px;color:#000">S</div>
<div class="t" style="left:318.10px;top:683px;font-size:14px;letter-spacing:0.000px;color:#000">217</div>
<div class="t" style="left:368.55px;top:683px;font-size:14px;letter-spacing:2.051px;color:#000;transform:scaleX(0.850);transform-origin:0 0">LISTAGENS - PONTO DIÁRIO</div>
<div class="t" style="left:1109.85px;top:683px;font-size:14px;letter-spacing:2.753px;color:#000;transform:scaleX(0.850);transform-origin:0 0">MATRIZ</div>
<div class="t" style="left:1203.70px;top:683px;font-size:14px;letter-spacing:0.000px;color:#000">S</div>
<svg style="position:absolute;left:600px;top:710px" width="100" height="6"><path d="M19.2 5.5 L21.2 3" stroke="#000" stroke-width="1.3"/><rect x="59" y="5" width="1.5" height="1" fill="#000"/><rect x="90" y="5" width="1.5" height="1" fill="#000"/></svg>
<!-- scrollbar -->
<div style="position:absolute;left:1350px;top:55px;width:16px;height:661px;background:#f0f0f0"></div>
<div style="position:absolute;left:1350px;top:72px;width:15px;height:261px;background:#cdcdcd"></div>
<svg style="position:absolute;left:1350px;top:55px" width="16" height="661">
 <path d="M4 11.5 L7.5 8 L11 11.5" fill="none" stroke="#606060" stroke-width="1.6"/>
 <path d="M4 650 L7.5 653.5 L11 650" fill="none" stroke="#606060" stroke-width="1.6"/>
</svg>
<!-- status bar -->
<div style="position:absolute;left:0;top:716px;width:1366px;height:22px;background:#f0f0f0"></div>
<div style="position:absolute;left:0;top:738px;width:1366px;height:1px;background:#102a28"></div>
<div class="pn" style="left:0;width:100px"></div>
<div class="pn" style="left:102px;width:118px"></div>
<div class="pn" style="left:222px;width:298px"></div>
<div class="pn" style="left:522px;width:844px"></div>
<div class="t" style="left:36.20px;top:710px;font-size:12px;letter-spacing:0.296px;color:#000000;-webkit-text-stroke:0;transform:scaleX(0.900);transform-origin:0 0">100%</div>
<div class="t" style="left:103.50px;top:710px;font-size:12px;letter-spacing:0.278px;color:#000000;-webkit-text-stroke:0;transform:scaleX(0.900);transform-origin:0 0">Página 1 De 6</div>
<div class="t" style="left:524.40px;top:710px;font-size:12px;letter-spacing:0.694px;color:#000000;-webkit-text-stroke:0;transform:scaleX(0.900);transform-origin:0 0">Zoom 150%</div>
<!-- watermark -->
<svg style="position:absolute;left:0;top:0" width="1366" height="739">
 <defs>
  <linearGradient id="wg" gradientUnits="userSpaceOnUse" x1="0" y1="0" x2="300" y2="0">
   <stop offset="0" stop-color="hsl(130,100%,50%)"/>
   <stop offset="0.13" stop-color="hsl(165,100%,50%)"/>
   <stop offset="0.26" stop-color="hsl(200,100%,50%)"/>
   <stop offset="0.34" stop-color="hsl(228,100%,55%)"/>
   <stop offset="0.43" stop-color="hsl(265,100%,55%)"/>
   <stop offset="0.50" stop-color="hsl(290,100%,55%)"/>
   <stop offset="0.60" stop-color="hsl(320,100%,50%)"/>
   <stop offset="0.70" stop-color="hsl(350,100%,50%)"/>
   <stop offset="0.78" stop-color="hsl(20,100%,50%)"/>
   <stop offset="0.87" stop-color="hsl(50,100%,50%)"/>
   <stop offset="1" stop-color="hsl(90,100%,50%)"/>
  </linearGradient>
  <pattern id="wp" x="0" y="-19" width="318" height="47" patternUnits="userSpaceOnUse">
   <text x="0" y="40" font-family="Liberation Sans" font-size="24" fill="url(#wg)">Made with Dr.Explain TRIAL</text>
  </pattern>
 </defs>
 <filter id="thin" x="0" y="0" width="1366" height="739" filterUnits="userSpaceOnUse">
  <feComponentTransfer><feFuncA type="linear" slope="2.2" intercept="-0.75"/></feComponentTransfer>
 </filter>
 <g opacity="0.14"><rect width="1366" height="739" fill="url(#wp)" filter="url(#thin)"/></g>
</svg>
</body></html>
